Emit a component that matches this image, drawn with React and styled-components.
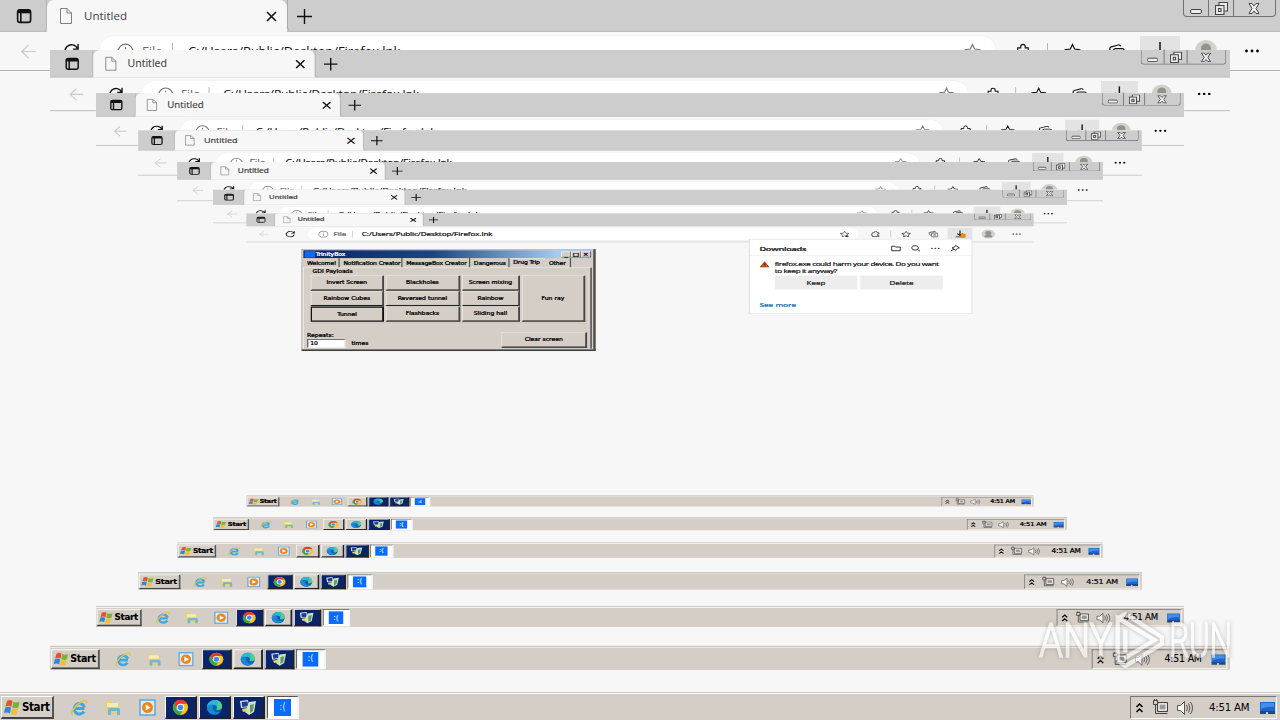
import React from "react";
import styled, { createGlobalStyle } from "styled-components";

const GlobalStyle = createGlobalStyle`
  * { box-sizing: border-box; }
  html, body { margin: 0; padding: 0; width: 1280px; height: 720px; overflow: hidden; background: #f7f7f7; }
`;
const ui = `"Open Sans", "Noto Sans", sans-serif`;
const classic = `"DejaVu Sans Condensed", "DejaVu Sans", sans-serif`;

const Screen = styled.div`
  width: 1280px;
  height: 720px;
  position: relative;
  display: flex;
  flex-direction: column;
  background: #f7f7f7;
  font-family: ${ui};
  overflow: hidden;
  -webkit-text-stroke: ${(p) => p.$ink}px currentColor;
`;
/* the same desktop, shrunk by about fifty pixels on every side */
const Inner = styled.div`
  position: absolute;
  left: 0;
  top: 0;
  transform-origin: 0 0;
  transform: translate(${(p) => p.$inset}px, 50px) scale(${(p) => (1280 - 2 * p.$inset) / 1280}, ${620 / 720});
`;

/* ---------- browser ---------- */
const TabStrip = styled.div`
  height: 32px;
  flex: none;
  display: flex;
  background: linear-gradient(#cdcdcd 30px, #bababa 32px);
`;
const TabActions = styled.div`
  width: 47px;
  display: flex;
  align-items: center;
  padding-left: 16px;
  border-right: 1px solid #b4b4b4;
  border-bottom-right-radius: 5px;
`;
const Tab = styled.div`
  width: 240px;
  height: 32px;
  display: flex;
  align-items: center;
  padding: 0 10px 0 12px;
  background: #f7f7f7;
  border-radius: 7px 7px 0 0;
`;
const TabTitle = styled.span`
  flex: 1;
  margin-left: 11px;
  font-size: 11.5px;
  line-height: 16px;
  color: #3c3c3c;
`;
const NewTab = styled.div`
  flex: 1;
  display: flex;
  align-items: center;
  padding-left: 9px;
  border-left: 1px solid #a8a8a8;
  border-bottom-left-radius: 5px;
`;
const Caption = styled.div`
  width: 93px;
  height: 17px;
  margin-right: 4px;
  display: flex;
  border: 1px solid #727272;
  border-top: 0;
  border-radius: 0 0 4px 4px;
`;
const CaptionButton = styled.div`
  width: ${(p) => p.$w}px;
  display: flex;
  align-items: center;
  justify-content: center;
  & + & { border-left: 1px solid #727272; }
`;
const Toolbar = styled.div`
  height: 39px;
  flex: none;
  display: flex;
  align-items: center;
  padding-left: 19px;
  border-bottom: 1px solid #b3b3b3;
`;
const Address = styled.div`
  width: 897px;
  height: 30px;
  margin: 0 18px 0 19px;
  padding: 0 15px 0 18px;
  display: flex;
  align-items: center;
  background: #fff;
  border-radius: 15px;
  box-shadow: 0 0 1px #ddd;
  font-size: 13px;
  line-height: 16px;
  color: #111;
`;
const Scheme = styled.span`
  margin-left: 8px;
  width: 30px;
  color: #666;
`;
const Url = styled.span`
  flex: 1;
  margin-left: 15px;
  letter-spacing: -0.08px;
`;
const Rule = styled.i`
  width: 1px;
  height: ${(p) => p.$h || 16}px;
  margin: 0 ${(p) => p.$m || 0}px;
  background: #b5b5b5;
`;
const Slot = styled.div`
  width: 18px;
  height: 18px;
  display: flex;
  align-items: center;
  justify-content: center;
  margin-left: ${(p) => p.$gap || 0}px;
`;
const DownloadButton = styled.div`
  width: 40px;
  height: 30px;
  margin-left: 15px;
  display: flex;
  align-items: center;
  justify-content: center;
  background: #e3e3e3;
`;
const Avatar = styled.div`
  width: 22px;
  height: 22px;
  margin-left: 15px;
  margin-right: 26px;
  border-radius: 50%;
  overflow: hidden;
  background: #d1d1cc;
`;
const Page = styled.div`
  flex: 1;
  padding: 17px 0 0 90px;
`;

/* ---------- downloads flyout ---------- */
const Flyout = styled.div`
  position: absolute;
  left: 817px;
  top: 63px;
  width: 363px;
  height: 184px;
  background: #fff;
  border: 1px solid #cfcfcf;
  font-size: 14px;
  color: #1b1b1b;
`;
const FlyoutHead = styled.div`
  height: 41px;
  display: flex;
  align-items: center;
  padding: 4px 18px 0 16px;
  gap: 14px;
  border-bottom: 1px solid #dedede;
`;
const FlyoutTitle = styled.b`
  flex: 1;
  font-size: 15px;
  font-weight: 600;
  letter-spacing: -0.5px;
`;
const Warning = styled.div`
  display: flex;
  padding: 12px 16px 0 16px;
  gap: 8px;
  line-height: 16px;
  height: 48px;
  white-space: nowrap;
`;
const WarningText = styled.div`
  letter-spacing: -0.6px;
  font-size: 13.1px;
`;
const Choices = styled.div`
  display: flex;
  gap: 5px;
  padding-left: 41px;
`;
const Choice = styled.div`
  width: 134px;
  height: 34px;
  background: #ededed;
  display: flex;
  align-items: center;
  justify-content: center;
  font-size: 13px;
  padding-top: 3px;
`;
const SeeMore = styled.div`
  padding: 28px 0 0 16px;
  font-size: 13.5px;
  color: #0b6cb4;
`;

/* ---------- classic dialog ---------- */
const Dialog = styled.div`
  width: 478px;
  height: 250px;
  padding: 2px;
  display: flex;
  flex-direction: column;
  background: #d4cec6;
  border: solid;
  border-width: 1px 4px 4px 1px;
  border-color: #aaa69f #505050 #404040 #aaa69f;
  font: 11px ${classic};
  color: #000;
`;
const DialogTitle = styled.div`
  height: 19px;
  flex: none;
  display: flex;
  align-items: center;
  padding: 0 2px;
  background: linear-gradient(90deg, #0a246a, #1d4386 45%, #a6caf0 88%);
  color: #fff;
`;
const TitleBlue = styled.i`
  width: 17px;
  height: 16px;
  margin-right: 1px;
  background: #0a6cf0;
`;
const TitleButton = styled.span`
  width: 16px;
  height: 15px;
  display: flex;
  align-items: center;
  justify-content: center;
  background: #d4cec6;
  border: 1px solid;
  border-color: #fff #333 #333 #fff;
  color: #000;
  font-size: 12px;
`;
const DialogTabs = styled.div`
  display: flex;
  height: 23px;
  flex: none;
  align-items: stretch;
`;
const DialogTab = styled.div`
  width: ${(p) => p.$w}px;
  display: flex;
  align-items: center;
  padding: 3px 0 0 6px;
  white-space: nowrap;
  letter-spacing: -0.2px;
  border-right: ${(p) => (p.$on ? 0 : 2)}px solid #555;
  ${(p) => p.$on && "border-top: 1px solid #fff; padding-bottom: 4px;"}
`;
const Sheet = styled.div`
  flex: 1;
  border: solid;
  border-width: 1px 3px 0 1px;
  border-color: #fff #666 #666 #fff;
  padding: 4px 2px 0 3px;
`;
const Group = styled.fieldset`
  margin: 0;
  padding: 5px 2px 0 6px;
  height: 134px;
  border: 2px groove #f0ede8;
  display: grid;
  grid-template-columns: 119px 121px 94px 103px;
  grid-template-rows: 37px 37px 37px;
  gap: 1px 3px;
`;
const Legend = styled.legend`
  padding: 0 3px;
  line-height: 10px;
`;
const PushButton = styled.div`
  display: flex;
  align-items: center;
  justify-content: center;
  grid-row: ${(p) => (p.$tall ? "1 / span 3" : "auto")};
  grid-column: ${(p) => (p.$tall ? "4" : "auto")};
  width: ${(p) => (p.$w ? p.$w + "px" : "auto")};
  height: ${(p) => (p.$w ? "38px" : "auto")};
  border: solid;
  border-width: ${(p) => (p.$focus ? "3px" : "1px")} 3px 3px ${(p) => (p.$focus ? "2px" : "1px")};
  border-color: ${(p) => (p.$focus ? "#111" : "#f4f2ee #444 #222 #f4f2ee")};
`;
const DialogFoot = styled.div`
  display: flex;
  justify-content: space-between;
  align-items: flex-end;
  padding: 20px 3px 0 2px;
`;
const Repeat = styled.div`
  display: grid;
  grid-template-columns: 62px auto;
  column-gap: 10px;
  align-items: center;
  line-height: 17px;
  & > :first-child { grid-column: 1 / 3; }
`;
const Field = styled.div`
  height: 21px;
  padding-left: 3px;
  background: #fff;
  border: 2px solid;
  border-color: #555 #eee #eee #555;
`;

/* ---------- taskbar ---------- */
const Taskbar = styled.div`
  height: 28px;
  flex: none;
  display: flex;
  align-items: center;
  padding: 3px 3px 1px 1px;
  background: #d4cec6;
  border-top: 1px solid #cac7c1;
  box-shadow: inset 0 1px #fff;
`;
const Start = styled.div`
  width: 53px;
  height: 23px;
  margin-right: 8px;
  padding-left: 2px;
  display: flex;
  align-items: center;
  gap: 1px;
  border: solid;
  border-width: 1px 2px 2px 1px;
  border-color: #fff #555 #444 #fff;
  font: bold 11.5px ${classic};
  letter-spacing: -0.4px;
`;
const Launch = styled.div`
  width: 34px;
  display: flex;
  justify-content: center;
`;
const Task = styled.div`
  width: 32px;
  height: 23px;
  margin-left: 2px;
  position: relative;
  display: flex;
  align-items: center;
  justify-content: center;
  border: solid;
  border-width: 1px 2px 2px 1px;
  border-color: ${(p) => (p.$tone === "pressed" ? "#555 #f4f4f4 #fff #555" : "#fff #222 #222 #fff")};
  background: ${(p) => ({ navy: "#0a246a", plain: "#d4cec6", pressed: "#fff" })[p.$tone]};
`;
const Tasks = styled.div`
  display: flex;
  margin-left: -1px;
`;
const Sad = styled.span`
  width: 17px;
  height: 17px;
  background: #0a6cff;
  color: #cfe3ff;
  text-align: center;
  font: 10px/15px ${classic};
`;
const Spacer = styled.div`
  flex: 1;
`;
const Tray = styled.div`
  width: 147px;
  height: 23px;
  display: flex;
  align-items: center;
  border: 1px solid;
  border-color: #777 #fff #fff #777;
  padding-left: 4px;
`;
const Clock = styled.span`
  width: 50px;
  margin-left: 15px;
  font: 11.3px ${classic};
  letter-spacing: -0.2px;
  white-space: nowrap;
`;

/* ---------- watermark ---------- */
const Mark = styled.div`
  position: absolute;
  left: 1039px;
  top: 606px;
  width: 193px;
  height: 70px;
  display: flex;
  align-items: center;
  justify-content: space-between;
  opacity: 0.6;
  filter: drop-shadow(0 0 2px rgba(60, 60, 60, 0.5));
`;
const MarkText = styled.span`
  width: 62px;
  font: 300 49px/70px Roboto, sans-serif;
  color: #fff;
  -webkit-text-stroke: 1.6px #fff;
  transform: scaleX(${(p) => p.$x});
  transform-origin: ${(p) => p.$o} center;
  display: flex;
  justify-content: ${(p) => (p.$o === "left" ? "flex-start" : "flex-end")};
`;

/* ---------- drawings ---------- */
const Line = ({ w = 18, h = w, vb = "0 0 18 18", c = "#111", s = 1.3, children }) => (
  <svg width={w} height={h} viewBox={vb} fill="none" stroke={c} strokeWidth={s}>{children}</svg>
);
const WorkspaceIcon = () => (
  <Line s={1.6}><rect x="1.6" y="2.8" width="13" height="12.6" rx="2.4" /><path d="M2 4.6h12.4" strokeWidth="3.4" /><path d="M4.8 5v10" /></Line>
);
const PageIcon = () => (
  <Line w={14} h={18} vb="0 0 14 18" c="#808080" s={1}><path d="M1.5 1.5h6.5l4.5 4.5v10.5h-11zM8 1.5V6h4.5" /></Line>
);
const Star = ({ c, plus }) => (
  <Line w={17} c={c}><path d="M9 1.6l2.2 4.8 5.2.6-3.8 3.6 1 5.2L9 13.2l-4.6 2.6 1-5.2L1.6 7l5.2-.6z" />{plus && <path d="M13 11v6M10 14h6" strokeWidth="2" />}</Line>
);
const Puzzle = () => (
  <Line w={16}><path d="M3 5.5h3.5V4a2.5 2.5 0 0 1 5 0v1.5H15V9h-1.3a2 2 0 0 0 0 4H15v3H3v-3.5h-.6a2 2 0 0 1 0-4H3z" /></Line>
);
const Collections = () => (
  <Line w={17}><path d="M4 12.5 2 6.8a2 2 0 0 1 1.4-2.6l7.6-2.1a2 2 0 0 1 2.5 1.5M6 14V8a2 2 0 0 1 2-2h7a2 2 0 0 1 2 2v6a2 2 0 0 1-2 2H8a2 2 0 0 1-2-2M9 11h5" /></Line>
);
const Dots = () => (
  <svg width="18" height="18" viewBox="0 0 18 18"><circle cx="3.5" cy="9" r="1.4" /><circle cx="9" cy="9" r="1.4" /><circle cx="14.5" cy="9" r="1.4" /></svg>
);
const Flag = () => (
  <svg width="17" height="17" viewBox="0 0 17 17"><path d="M3 2q3-2 5.500 0L7.300 8Q5 6 1.500 7.500z" fill="#e5532a" /><path d="M9.300 2.500q3 1.700 6.500 0L14.300 8.500q-3 1.500-6 0z" fill="#76b72a" /><path d="M1.300 8.500q3-1.500 5.700 0L6 14.500Q3.500 12.800 0 14z" fill="#3387d6" /><path d="M8 9.500q3 1.500 6 0l-1.200 5.500q-3 1.700-6 0z" fill="#f6bd2c" /></svg>
);
const Explorer = () => (
  <svg width="18" height="18" viewBox="0 0 18 18" fill="none"><path d="M14.500 9.500H5M14 12.500A5.300 5.300 0 1 1 14.400 8" stroke="#3ca8dd" strokeWidth="3" /><path d="M3 16C-1 16 4 7 11 3c5-3 7-2 5 2" stroke="#e1c34d" strokeWidth="1.5" /></svg>
);
const Folder = () => (
  <svg width="18" height="18" viewBox="0 0 18 18"><path d="M2 2h5l1 2h7v11H2z" fill="#ecd06d" /><path d="M3 4h11v4H3z" fill="#f8ecae" /><path d="M4 16v-5q0-2 2-2h8q2 0 2 2v5h-3v-4H7v4z" fill="#6fb6dc" /></svg>
);
const Player = () => (
  <svg width="17" height="17" viewBox="0 0 17 17"><rect x="1" y="1" width="15" height="15" fill="#d8ecfa" stroke="#5ca3d8" strokeWidth="1.4" /><circle cx="8.5" cy="8.5" r="5.5" fill="#ee8617" /><path d="m6.700 5.400 5 3.100-5 3.100z" fill="#fff" /></svg>
);
const Chrome = () => (
  <svg width="17" height="17" viewBox="0 0 18 18"><circle cx="9" cy="9" r="8" fill="#fbc116" /><path d="M2 5A8 8 0 0 1 16 5H9a4 4 0 0 0-3.500 6z" fill="#e33b2e" /><path d="M2 5a8 8 0 0 0 6.500 12l3.500-6a4 4 0 0 1-6.500 0z" fill="#2da94f" /><circle cx="9" cy="9" r="4" fill="#fff" /><circle cx="9" cy="9" r="3" fill="#4285f4" /></svg>
);
const Edge = () => (
  <svg width="17" height="17" viewBox="0 0 18 18"><circle cx="9" cy="9" r="8" fill="#0f5fb0" /><path d="M1 9C1-1 17-2 17 8c0 3-4 4-6 3 2-3-1-5-4-5S2 7 1 9z" fill="#2bb5d8" /><path d="M11 1.300C15 2 17 5 17 8c0 3-4 4-6 3 2-3 3-6 0-9.700z" fill="#58d07c" /><path d="M8 8c-2 3 1 7 7 6-5 5-14 2-14-5 1-3 4-4 7-1z" fill="#1a86d8" /></svg>
);
const Recycler = () => (
  <svg width="19" height="17" viewBox="0 0 19 17"><path d="M1 2l8-1 1 7-8 1z" fill="#dce9f8" /><path d="M2.500 3l6-.8.7 5-6 .8z" fill="#1f3d91" /><path d="M10 3l7-1-2 11-5 3-4-3z" fill="#cfe3c6" /><path d="M11 6l4-1-1 7-3 2z" fill="#5c9a67" /><path d="M3 10l5-1v3l-4 1z" fill="#e6d35a" /></svg>
);
const Chevrons = () => (
  <Line w={9} h={12} vb="0 0 9 12" c="#000" s={1.5}><path d="m1.500 5 3-3 3 3M1.500 10l3-3 3 3" /></Line>
);
const Network = () => (
  <Line w={18} h={17} vb="0 0 18 17" c="#444" s={1}><path d="M5.500 3.500h10v9h-10z" fill="#c5c2bb" /><path d="M7 5h7v6H7z" fill="#999" stroke="#fff" /><path d="M1.500 1.500h4v4h-4zM3.500 5.500v9h12M2.500 0v2M4.500 0v2" /></Line>
);
const Speaker = () => (
  <Line w={18} h={16} vb="0 0 18 16" c="#555" s={1}><path d="M1.500 5.500h3l4-4v13l-4-4h-3z" fill="#fafafa" /><path d="M10.500 5q2 3 0 6M12.500 3.500q3 4.500 0 9M14.500 2q4 6 0 12" /></Line>
);
const Monitor = () => (
  <svg width="17" height="14" viewBox="0 0 17 14"><path d="M1 1h15v10H1z" fill="#1b66d0" /><path d="M2 2h13v4Q8 5 2 8z" fill="#458fe8" /><path d="M1 10h15v3H9v-2H7v2H1z" fill="#25467e" /></svg>
);

const payloads = ["Invert Screen", "Blackholes", "Screen mixing", "Rainbow Cubes", "Reversed tunnel", "Rainbow", "Tunnel", "Flashbacks", "Sliding hall"];
const dialogTabs = [["Welcome!", 59], ["Notification Creator", 102], ["MessageBox Creator", 110], ["Dangerous", 64], ["Drug Trip", 58], ["Other", 42]];

const PayloadDialog = () => (
  <Dialog>
    <DialogTitle>
      <TitleBlue />
      TrinityBox
      <Spacer />
      <TitleButton>_</TitleButton><TitleButton>□</TitleButton><TitleButton>×</TitleButton>
    </DialogTitle>
    <DialogTabs>
      {dialogTabs.map(([name, w]) => <DialogTab key={name} $w={w} $on={name === "Drug Trip"}>{name}</DialogTab>)}
    </DialogTabs>
    <Sheet>
      <Group>
        <Legend>GDI Payloads</Legend>
        {payloads.map((name) => <PushButton key={name} $focus={name === "Tunnel"}>{name}</PushButton>)}
        <PushButton $tall>Fun ray</PushButton>
      </Group>
      <DialogFoot>
        <Repeat><span>Repeats:</span><Field>10</Field><span>times</span></Repeat>
        <PushButton $w={139}>Clear screen</PushButton>
      </DialogFoot>
    </Sheet>
  </Dialog>
);

const DownloadsFlyout = () => (
  <Flyout>
    <FlyoutHead>
      <FlyoutTitle>Downloads</FlyoutTitle>
      <Line s={1.6}><path d="M2 4h5l2 2h7v9H2z" /></Line>
      <Line s={1.6}><circle cx="8" cy="8" r="5.5" /><path d="m12 12 4 4" /></Line>
      <Dots />
      <Line s={1.6}><path d="m10 2 6 6-3 1-3 5-6-6 5-3zM7 11l-5 5" /></Line>
    </FlyoutHead>
    <Warning>
      <Line w={17} c="#8b2500"><path d="M9 2l7.500 14h-15z" fill="#d05a12" /><path d="M9 6v6" strokeWidth="3" /></Line>
      <WarningText>firefox.exe could harm your device. Do you want<br />to keep it anyway?</WarningText>
    </Warning>
    <Choices><Choice>Keep</Choice><Choice>Delete</Choice></Choices>
    <SeeMore>See more</SeeMore>
  </Flyout>
);

const LAST = 6;

function Desktop({ depth }) {
  const last = depth === LAST;
  const bold = depth * 0.06;
  return (
    <Screen $ink={depth * 0.09}>
      <TabStrip>
        <TabActions><WorkspaceIcon /></TabActions>
        <Tab>
          <PageIcon />
          <TabTitle>Untitled</TabTitle>
          <Line w={11} vb="0 0 11 11" s={1.6 + bold}><path d="m1 1 9 9M10 1l-9 9" /></Line>
        </Tab>
        <NewTab><Line w={15} vb="0 0 15 15" s={1.4 + bold}><path d="M7.500 0v15M0 7.500h15" /></Line></NewTab>
        <Caption>
          <CaptionButton $w={25}><Line w={12} h={12} vb="0 0 12 12" c="#444" s={1 + bold}><rect x=".5" y="7.5" width="11" height="4" rx="1.5" fill="#eee" /></Line></CaptionButton>
          <CaptionButton $w={25}><Line w={13} h={13} vb="0 0 13 13" c="#444" s={1.1 + bold}><path d="M4 3.500v-3h8.500V9H9.500" fill="#eee" /><rect x=".5" y="3.5" width="8.5" height="9" fill="#eee" /><rect x="3.5" y="6.5" width="2.5" height="3" /></Line></CaptionButton>
          <CaptionButton $w={43}><Line w={12} h={11} vb="0 0 12 11" c="#444" s={1 + bold}><path d="M1 .5h3l2 2.500 2-2.500h3L8 5.500l3 5H8L6 8l-2 2.500H1l3-5z" fill="#eee" /></Line></CaptionButton>
        </Caption>
      </TabStrip>
      <Toolbar>
        <Slot><Line w={17} c="#c8c8c8"><path d="M17 9H2M9 2 2 9l7 7" /></Line></Slot>
        <Slot $gap={25}><Line w={17} s={1.5 + bold}><path d="M15.500 6A7 7 0 1 0 16 10M16 1v5.500h-5.500" /></Line></Slot>
        <Address>
          <Line w={17} c="#707070" s={1.2 + bold}><circle cx="9" cy="9" r="7.8" /><path d="M9 8v5M9 4.500v2" /></Line>
          <Scheme>File</Scheme>
          <Rule $h={17} />
          <Url>C:/Users/Public/Desktop/Firefox.lnk</Url>
          <Star c={last ? "#333" : "#777"} plus={last} />
        </Address>
        <Slot><Puzzle /></Slot>
        <Rule $m={15} />
        <Slot><Star /></Slot>
        <Slot $gap={26}><Collections /></Slot>
        <DownloadButton>
          <Line s={1.5 + bold}><path d="M9 0v12M4.500 8 9 12.500 13.500 8M2 16h14" />{last && <path d="M11 9h7v9h-7z" fill="#e88912" stroke="#e88912" />}</Line>
        </DownloadButton>
        <Avatar><svg width="22" height="22" viewBox="0 0 22 22"><circle cx="11" cy="8.5" r="5" fill="#92928c" /><path d="M4 19q1-6 7-6t7 6z" fill="#92928c" /></svg></Avatar>
        <Dots />
      </Toolbar>
      <Page>{last && <PayloadDialog />}</Page>
      <Taskbar>
        <Start><Flag />Start</Start>
        <Launch><Explorer /></Launch>
        <Launch><Folder /></Launch>
        <Launch><Player /></Launch>
        <Tasks>
          <Task $tone={depth > 3 ? "plain" : "navy"}><Chrome /></Task>
          <Task $tone={depth === 0 || last ? "navy" : "plain"}><Edge /></Task>
          <Task $tone="navy"><Recycler /></Task>
          <Task $tone="pressed"><Sad>:(</Sad></Task>
        </Tasks>
        <Spacer />
        <Tray>
          <Chevrons />
          <Slot $gap={8}><Network /></Slot>
          <Slot $gap={6}><Speaker /></Slot>
          <Clock>4:51 AM</Clock>
          <Monitor />
        </Tray>
      </Taskbar>
      {last ? <DownloadsFlyout /> : <Inner $inset={depth === 0 ? 50 : 49.7}><Desktop depth={depth + 1} /></Inner>}
    </Screen>
  );
}

export default function App() {
  return (
    <>
      <GlobalStyle />
      <Desktop depth={0} />
      <Mark>
        <MarkText $x={0.78} $o="left">ANY</MarkText>
        <Line w={56} h={66} vb="0 0 58 68" c="#fff" s={4.5}><path d="M10 54V10l38 23-31 19M10 10l8-4 38 24v7L18 60l-8-6M18 22v24" /></Line>
        <MarkText $x={0.64} $o="right">RUN</MarkText>
      </Mark>
    </>
  );
}
